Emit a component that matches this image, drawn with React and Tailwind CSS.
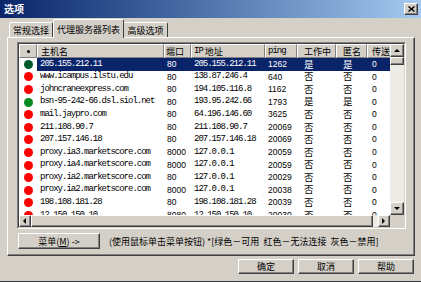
import React from 'react';

const rows = [
  ['205.155.212.11', '80', '205.155.212.11', '1262', '是', '是', '0', 'sel'],
  ['www.icampus.ilstu.edu', '80', '138.87.246.4', '640', '否', '否', '0', 'red'],
  ['johncraneexpress.com', '80', '194.105.116.8', '1162', '否', '否', '0', 'red'],
  ['bsn-95-242-66.dsl.siol.net', '80', '193.95.242.66', '1793', '是', '是', '0', 'green'],
  ['mail.jaypro.com', '80', '64.196.146.60', '3625', '否', '否', '0', 'red'],
  ['211.108.90.7', '80', '211.108.90.7', '20069', '否', '否', '0', 'red'],
  ['207.157.146.18', '80', '207.157.146.18', '20069', '否', '否', '0', 'red'],
  ['proxy.ia3.marketscore.com', '8000', '127.0.0.1', '20059', '否', '否', '0', 'red'],
  ['proxy.ia4.marketscore.com', '8000', '127.0.0.1', '20059', '否', '否', '0', 'red'],
  ['proxy.ia2.marketscore.com', '80', '127.0.0.1', '20029', '否', '否', '0', 'red'],
  ['proxy.ia2.marketscore.com', '8000', '127.0.0.1', '20038', '否', '否', '0', 'red'],
  ['198.108.181.28', '80', '198.108.181.28', '20039', '否', '否', '0', 'red'],
  ['12.150.150.10', '8080', '12.150.150.10', '20030', '否', '否', '0', 'red'],
];

const raised =
  'border-t border-l border-t-white border-l-white border-r border-b border-r-[#404040] border-b-[#404040] shadow-[inset_-1px_-1px_0_#808080]';

const mono = "font-['Liberation_Mono',monospace] text-[9px] tracking-[-1px]";
const num = "font-['Liberation_Sans',sans-serif] text-[8.5px]";

function Arrow({ dir }) {
  const pts = {
    up: '1,5 4,2 7,5',
    down: '1,2 4,5 7,2',
    left: '5,1 2,4 5,7',
    right: '2,1 5,4 2,7',
  }[dir];
  return (
    <svg width="8" height="8" viewBox="0 0 8 8">
      <polygon points={pts} fill="#000" />
    </svg>
  );
}

function SBtn({ dir, className }) {
  return (
    <div className={`${raised} bg-[#d4d0c8] flex items-center justify-center ${className}`}>
      <Arrow dir={dir} />
    </div>
  );
}

function HeadCell({ className, children }) {
  return (
    <div
      className={`h-full flex items-center border-t border-l border-white border-r border-b border-r-[#808080] border-b-[#808080] overflow-hidden whitespace-nowrap text-[9px] leading-none ${className}`}
    >
      {children}
    </div>
  );
}

function Row({ r }) {
  const [host, port, ip, ping, work, anon, send, kind] = r;
  const sel = kind === 'sel';
  const dot = sel ? 'bg-[#00592a]' : kind === 'green' ? 'bg-[#078a23]' : 'bg-[#ff0000]';
  return (
    <div className="flex h-[12.6px] shrink-0 items-center">
      <div className="w-[18px] h-full flex items-center justify-center">
        <span className={`w-[9px] h-[9px] rounded-full ${dot}`} />
      </div>
      <div className={`flex h-full items-center whitespace-nowrap ${sel ? 'bg-[#0a246a] text-white' : 'text-black'}`}>
        <div className={`w-[127px] pl-[3px] ${mono}`}>{host}</div>
        <div className={`w-[27px] pl-[3px] ${num}`}>{port}</div>
        <div className={`w-[74px] pl-[3px] ${mono}`}>{ip}</div>
        <div className={`w-[32px] pl-[3px] ${num}`}>{ping}</div>
        <div className="w-[39px] pl-[7px] text-[9.5px] leading-none">{work}</div>
        <div className="w-[31px] pl-[7px] text-[9.5px] leading-none">{anon}</div>
        <div className={`w-[23px] pl-[5px] ${num}`}>{send}</div>
      </div>
    </div>
  );
}

function Button({ children, className }) {
  return (
    <div className={`${raised} bg-[#d4d0c8] flex items-center justify-center text-[9px] leading-none ${className}`}>
      {children}
    </div>
  );
}

export default function App() {
  return (
    <div className="w-[421px] h-[282px] bg-[#d4d0c8] flex flex-col overflow-hidden font-['Noto_Sans_CJK_SC',sans-serif] text-black border-b border-b-[#404040]">
      {/* title bar */}
      <div className="h-[18px] shrink-0 flex items-center justify-between pl-[4px] pr-[3px] bg-linear-to-r from-[#0a246a] to-[#a6caf0]">
        <span className="text-white font-bold text-[10px] leading-none">选项</span>
        <div className={`${raised} bg-[#d4d0c8] w-[14px] h-[12px] flex items-center justify-center`}>
          <svg width="7" height="6" viewBox="0 0 7 6">
            <path d="M0.5 0.5 L6.5 5.5 M6.5 0.5 L0.5 5.5" stroke="#000" strokeWidth="1.4" />
          </svg>
        </div>
      </div>

      <div className="pl-[7px] pr-[6px] flex flex-col">
        {/* tabs */}
        <div className="flex items-end h-[19px] pl-[2px]">
          <div className="w-[44px] h-[15px] flex items-center justify-center text-[9px] leading-none border-t border-l border-white border-r border-r-[#404040] rounded-t-[2px]">
            常规选择
          </div>
          <div className="relative z-10 -mb-px w-[71px] h-[19px] flex items-center justify-center text-[9px] leading-none bg-[#d4d0c8] border-t border-l border-white border-r border-r-[#404040] rounded-t-[2px]">
            代理服务器列表
          </div>
          <div className="w-[44px] h-[15px] flex items-center justify-center text-[9px] leading-none border-t border-white border-r border-r-[#404040] rounded-t-[2px]">
            高级选项
          </div>
        </div>

        {/* panel */}
        <div className="h-[219px] border-t border-l border-white border-r border-b border-r-[#404040] border-b-[#404040] shadow-[inset_-1px_-1px_0_#808080] pt-[4px] pl-[9px] pr-[8px] flex flex-col">
          <div className="w-[389px] h-[187px] border border-t-[#808080] border-l-[#808080] border-r-white border-b-white">
            <div className="h-full border border-t-[#404040] border-l-[#404040] border-r-[#d4d0c8] border-b-[#d4d0c8] bg-white flex flex-col">
              <div className="flex h-[171px]">
                <div className="w-[371px] flex flex-col overflow-hidden">
                  <div className="flex h-[14px] shrink-0 bg-[#d4d0c8]">
                    <HeadCell className="w-[18px] justify-center">
                      <span className="w-[3px] h-[3px] rounded-full bg-black" />
                    </HeadCell>
                    <HeadCell className="w-[127px] pl-[3px]">主机名</HeadCell>
                    <HeadCell className="w-[27px] pl-[1px]">端口</HeadCell>
                    <HeadCell className="w-[74px] pl-[2px]">
                      <span className={mono}>IP</span>&nbsp;地址
                    </HeadCell>
                    <HeadCell className="w-[32px] pl-[2px]">
                      <span className={mono}>ping</span>
                    </HeadCell>
                    <HeadCell className="w-[39px] pl-[6px]">工作中</HeadCell>
                    <HeadCell className="w-[31px] pl-[6px]">匿名</HeadCell>
                    <HeadCell className="w-[23px] pl-[4px] border-r-0">传送</HeadCell>
                  </div>
                  <div className="flex-1 overflow-hidden flex flex-col">
                    {rows.map((r, i) => (
                      <Row key={i} r={r} />
                    ))}
                  </div>
                </div>
                <div className="w-[14px] flex flex-col bg-[#ecebe6]">
                  <SBtn dir="up" className="h-[13px]" />
                  <div className={`${raised} bg-[#d4d0c8] h-[8px]`} />
                  <div className="flex-1" />
                  <SBtn dir="down" className="h-[13px]" />
                </div>
              </div>
              <div className="flex h-[12px]">
                <div className="w-[371px] flex bg-[#ecebe6]">
                  <SBtn dir="left" className="w-[12px]" />
                  <div className={`${raised} bg-[#d4d0c8] w-[342px]`} />
                  <div className="flex-1" />
                  <SBtn dir="right" className="w-[12px]" />
                </div>
                <div className="w-[14px] bg-[#d4d0c8]" />
              </div>
            </div>
          </div>

          <div className="flex items-center mt-[4px] pl-[1px]">
            <Button className="w-[82px] h-[16px]">
              菜单(<span className="underline">M</span>)&nbsp;-&gt;
            </Button>
            <span className="ml-[9px] text-[9px] leading-none whitespace-nowrap">
              (使用鼠标单击菜单按钮) *[绿色－可用&nbsp;&nbsp;红色－无法连接&nbsp;&nbsp;灰色－禁用]
            </span>
          </div>
        </div>
      </div>

      {/* dialog buttons */}
      <div className="flex justify-end gap-[4px] pr-[7px] mt-[3px]">
        <Button className="w-[56px] h-[15px]">确定</Button>
        <Button className="w-[56px] h-[15px]">取消</Button>
        <Button className="w-[56px] h-[15px]">帮助</Button>
      </div>
    </div>
  );
}
